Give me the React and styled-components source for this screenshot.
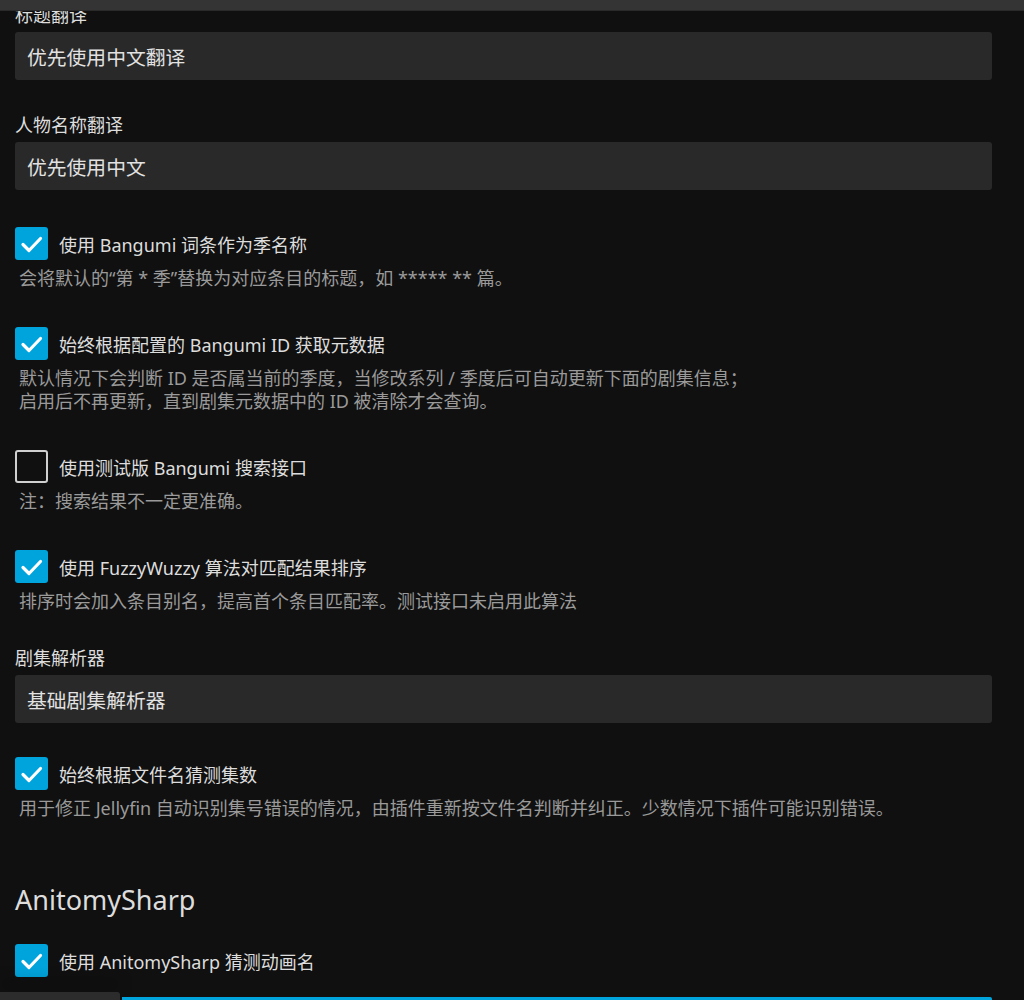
import React from "react";
import styled, { createGlobalStyle } from "styled-components";

const Global = createGlobalStyle`
  html, body { margin: 0; padding: 0; background: #101010; }
  body {
    font-family: "Noto Sans", "Noto Sans CJK SC", sans-serif;
    font-size: 18px;
    color: #dddddd;
    overflow: hidden;
  }
`;

const TopBar = styled.div`
  position: fixed;
  top: 0; left: 0; right: 0;
  height: 10px;
  background: #343434;
  border-bottom: 1px solid #2a2a2a;
  z-index: 5;
`;

const Page = styled.div`
  width: 992px;
  padding: 3px 0 0 15px;
  height: 1000px;
  box-sizing: border-box;
  overflow: hidden;
`;

const SelectField = styled.div`
  margin-bottom: ${(p) => p.$mb || 33}px;
`;

const Label = styled.div`
  font-size: 18px;
  line-height: 24px;
  margin-bottom: 5px;
  color: #dddddd;
`;

const SelectBox = styled.div`
  height: 48px;
  background: #292929;
  border-radius: 3px;
  display: flex;
  align-items: center;
  padding: 0 12px;
  font-size: 19.8px;
  color: #e2e2e2;
`;

const CheckField = styled.div`
  margin-bottom: ${(p) => (p.$mb === undefined ? 37 : p.$mb)}px;
`;

const CheckRow = styled.div`
  display: flex;
  align-items: center;
  gap: 11px;
  height: 33px;
`;

const Box = styled.div`
  width: 33px;
  height: 33px;
  box-sizing: border-box;
  border-radius: 3px;
  background: ${(p) => (p.$checked ? "#00a4dc" : "transparent")};
  border: ${(p) => (p.$checked ? "none" : "2px solid #d0d0d0")};
  display: flex;
  align-items: center;
  justify-content: center;
  flex: none;
`;

const CheckText = styled.span`
  font-size: 18px;
  color: #dddddd;
`;

const Desc = styled.div`
  margin-top: 7px;
  padding-left: 4px;
  font-size: 18px;
  line-height: 23px;
  color: #9a9a9a;
`;

const Heading = styled.h2`
  margin: 64px 0 28px;
  font-size: 27px;
  line-height: 32px;
  font-weight: 400;
  color: #dddddd;
`;

const Footer = styled.div`
  position: fixed;
  left: 0; right: 0; bottom: 0;
  height: 8px;
  display: flex;
  align-items: flex-end;
  gap: 2px;
  z-index: 5;
`;

const FooterGray = styled.div`
  width: 120px;
  height: 8px;
  background: #2c2c2c;
  border-top-right-radius: 3px;
  box-shadow: 0 -12px 14px rgba(0, 0, 0, 0.25);
`;

const FooterBlue = styled.div`
  width: 870px;
  height: 3px;
  background: #00a4dc;
  border-top-right-radius: 2px;
`;

const Check = () => (
  <svg width="33" height="33" viewBox="0 0 33 33">
    <polyline
      points="8,17.5 14,23.5 25.5,11.5"
      fill="none"
      stroke="#ffffff"
      strokeWidth="3.2"
      strokeLinecap="round"
      strokeLinejoin="round"
    />
  </svg>
);

const Checkbox = ({ checked, label, desc, mb }) => (
  <CheckField $mb={mb}>
    <CheckRow>
      <Box $checked={checked}>{checked && <Check />}</Box>
      <CheckText>{label}</CheckText>
    </CheckRow>
    {desc && (
      <Desc>
        {desc.map((l, i) => (
          <div key={i}>{l}</div>
        ))}
      </Desc>
    )}
  </CheckField>
);

const Select = ({ label, value, mb }) => (
  <SelectField $mb={mb}>
    <Label>{label}</Label>
    <SelectBox>{value}</SelectBox>
  </SelectField>
);

export default function App() {
  return (
    <>
      <Global />
      <TopBar />
      <Page>
        <Select label="标题翻译" value="优先使用中文翻译" />
        <Select label="人物名称翻译" value="优先使用中文" mb={37} />
        <Checkbox
          checked
          label="使用 Bangumi 词条作为季名称"
          desc={["会将默认的“第 * 季”替换为对应条目的标题，如 ***** ** 篇。"]}
        />
        <Checkbox
          checked
          label="始终根据配置的 Bangumi ID 获取元数据"
          desc={[
            "默认情况下会判断 ID 是否属当前的季度，当修改系列 / 季度后可自动更新下面的剧集信息；",
            "启用后不再更新，直到剧集元数据中的 ID 被清除才会查询。",
          ]}
        />
        <Checkbox
          label="使用测试版 Bangumi 搜索接口"
          desc={["注：搜索结果不一定更准确。"]}
        />
        <Checkbox
          checked
          label="使用 FuzzyWuzzy 算法对匹配结果排序"
          desc={["排序时会加入条目别名，提高首个条目匹配率。测试接口未启用此算法"]}
          mb={33}
        />
        <Select label="剧集解析器" value="基础剧集解析器" mb={34} />
        <Checkbox
          checked
          label="始终根据文件名猜测集数"
          desc={["用于修正 Jellyfin 自动识别集号错误的情况，由插件重新按文件名判断并纠正。少数情况下插件可能识别错误。"]}
          mb={0}
        />
        <Heading>AnitomySharp</Heading>
        <Checkbox checked label="使用 AnitomySharp 猜测动画名" />
      </Page>
      <Footer>
        <FooterGray />
        <FooterBlue />
      </Footer>
    </>
  );
}
